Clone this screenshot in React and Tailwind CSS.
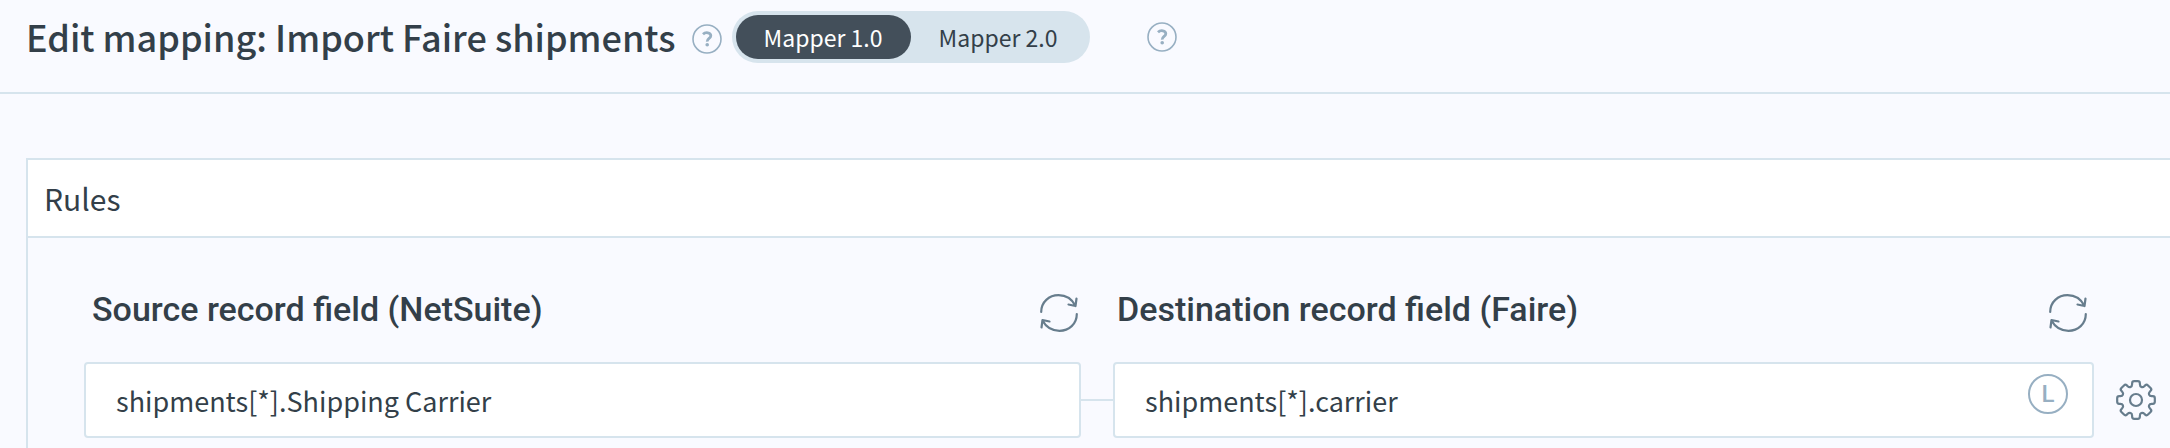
import { useState } from 'react';

const TEETH = 8;

/**
 * Builds the outline of the settings gear, with softened corners.
 *
 * @returns {string} SVG path data, centred on 0,0.
 */
function gearPath() {
    const points = [];
    for (let i = 0; i < TEETH; i++) {
        [[-16, 14.2], [-11.5, 19.2], [11.5, 19.2], [16, 14.2]].forEach(([deg, r]) => {
            const a = ((i * 360) / TEETH + deg - 90) * (Math.PI / 180);
            points.push([r * Math.cos(a), r * Math.sin(a)]);
        });
    }
    const along = (from, to, dist) => {
        const len = Math.hypot(to[0] - from[0], to[1] - from[1]);
        const t = Math.min(dist / len, 0.5);
        return [from[0] + (to[0] - from[0]) * t, from[1] + (to[1] - from[1]) * t];
    };
    const parts = points.map((p, i) => {
        const prev = points[(i + points.length - 1) % points.length];
        const next = points[(i + 1) % points.length];
        return `${i ? 'L' : 'M'}${along(p, prev, 2)} Q${p} ${along(p, next, 2)}`;
    });
    return `${parts.join(' ')} Z`;
}

const gear = gearPath();

function GearIcon() {
    return (
        <svg viewBox="-20 -20 40 40" className="size-10" fill="none" stroke="currentColor" strokeWidth="2.2" aria-hidden="true">
            <path d={gear} />
            <circle r="6" />
        </svg>
    );
}

function RefreshIcon() {
    return (
        <svg viewBox="0 0 38 38" className="size-[38px]" fill="none" stroke="currentColor" strokeWidth="2.2" strokeLinecap="round" strokeLinejoin="round" aria-hidden="true">
            <path d="M1.200 18C1.200 8 9 1.200 18.500 1.200C26 1.200 32 5 35.500 12M28.500 10.500L35.500 12L36.500 4.500" />
            <path d="M36.800 20C36.800 30 29 36.800 19.500 36.800C12 36.800 6 33 2.500 26.500M9.500 27.500L2.500 26L1.500 33.500" />
        </svg>
    );
}

function HelpButton({ label }) {
    return (
        <button type="button" aria-label={label} className="flex size-[30px] shrink-0 items-center justify-center text-[#97afc2]">
            <svg viewBox="0 0 30 30" className="size-[30px]" fill="none" stroke="currentColor" aria-hidden="true">
                <circle cx="15" cy="15" r="14" strokeWidth="1.6" />
                <path d="M11 10.200C13.500 7.800 18.800 8.300 18.800 11.700C18.800 14.400 15 14.500 15.200 17.600" strokeWidth="2.800" />
                <circle cx="15.200" cy="20.700" r="1.800" fill="currentColor" stroke="none" />
            </svg>
        </button>
    );
}

function ColumnHeading({ htmlFor, children, className }) {
    return (
        <div className={`flex items-center justify-between ${className}`}>
            <label htmlFor={htmlFor} className="font-[Roboto,sans-serif] text-[34px] leading-10 font-medium">
                {children}
            </label>
            <button type="button" aria-label="Refresh fields" className="mt-2 text-[#677d8d]">
                <RefreshIcon />
            </button>
        </div>
    );
}

const inputClass = 'h-[76px] w-full rounded-[4px] border-2 border-[#d6e4ed] bg-white px-[30px] text-[27px] outline-none';

export default function App() {
    const [version, setVersion] = useState('Mapper 1.0');
    const [source, setSource] = useState('shipments[*].Shipping Carrier');
    const [destination, setDestination] = useState('shipments[*].carrier');

    return (
        <div className="flex min-h-screen flex-col bg-[#f9faff] font-['Noto_Sans_CJK_SC',sans-serif] text-[#333f49]">
            <header className="flex h-[94px] items-start border-b-2 border-[#d6e4ed] pt-[11px] pl-[26px]">
                <h1 className="text-[36px] leading-[50px] font-medium whitespace-nowrap">
                    Edit mapping: Import Faire shipments
                </h1>
                <div className="mt-[13px] ml-4 flex">
                    <HelpButton label="About mappings" />
                </div>
                <div className="ml-[10px] flex h-[52px] rounded-full bg-[#d7e4ed] p-1">
                    {['Mapper 1.0', 'Mapper 2.0'].map((name) => (
                        <button
                            key={name}
                            type="button"
                            aria-pressed={version === name}
                            onClick={() => setVersion(name)}
                            className={`w-[175px] rounded-full text-[23px] leading-[42px] whitespace-nowrap ${version === name ? 'bg-[#434f5a] text-white' : ''}`}
                        >
                            {name}
                        </button>
                    ))}
                </div>
                <div className="mt-[11px] ml-[57px] flex">
                    <HelpButton label="About mapper versions" />
                </div>
            </header>

            <main className="flex grow flex-col pt-16 pl-[26px]">
                <section className="grow border-t-2 border-l-2 border-[#d6e4ed]">
                    <h2 className="h-[78px] border-b-2 border-[#d6e4ed] bg-white pl-4 text-[30px] leading-[76px]">Rules</h2>
                    <div className="grid grid-cols-[997fr_32px_981fr_76px] items-center gap-y-[30px] pt-12 pb-[10px] pl-14">
                        <ColumnHeading htmlFor="source" className="pr-[3px] pl-2">
                            Source record field (NetSuite)
                        </ColumnHeading>
                        <ColumnHeading htmlFor="destination" className="col-start-3 pr-[7px] pl-1">
                            Destination record field (Faire)
                        </ColumnHeading>

                        <input
                            id="source"
                            value={source}
                            onChange={(event) => setSource(event.target.value)}
                            className={`${inputClass} col-start-1`}
                        />
                        <div className="h-0.5 bg-[#d6e4ed]" />
                        <div className="relative">
                            <input
                                id="destination"
                                value={destination}
                                onChange={(event) => setDestination(event.target.value)}
                                className={inputClass}
                            />
                            <span className="absolute top-3 right-[26px] flex size-10 items-center justify-center rounded-full border-2 border-[#97afc2] font-[Roboto,sans-serif] text-2xl font-medium text-[#97afc2]">
                                L
                            </span>
                        </div>
                        <button type="button" aria-label="Mapping settings" className="ml-[22px] size-10 text-[#677d8d]">
                            <GearIcon />
                        </button>
                    </div>
                </section>
            </main>
        </div>
    );
}
